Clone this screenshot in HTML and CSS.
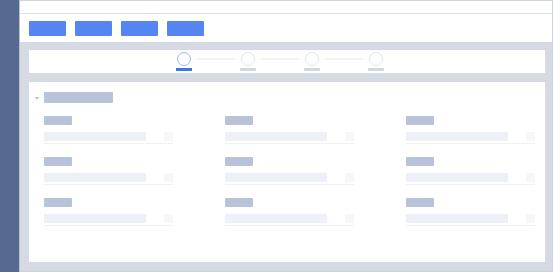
FILE: index.html
```html
<!DOCTYPE html>
<html lang="en">
<head>
    <meta charset="UTF-8">
    <title>Form wizard skeleton</title>
    <link rel="stylesheet" href="styles.css">
</head>
<body>
    <div class="frame">
        <aside class="sidebar"></aside>
        <div class="main">
            <div class="topbar"></div>
            <div class="toolbar">
                <span class="btn"></span>
                <span class="btn"></span>
                <span class="btn"></span>
                <span class="btn"></span>
            </div>
            <div class="content">
                <div class="card steps">
                    <div class="step active"><span class="dot"></span><span class="bar"></span></div>
                    <span class="link"></span>
                    <div class="step"><span class="dot"></span><span class="bar"></span></div>
                    <span class="link"></span>
                    <div class="step"><span class="dot"></span><span class="bar"></span></div>
                    <span class="link"></span>
                    <div class="step"><span class="dot"></span><span class="bar"></span></div>
                </div>
                <div class="card form">
                    <div class="section-head">
                        <span class="caret"></span>
                        <span class="title"></span>
                    </div>
                    <div class="fields">
                        <div class="field"><span class="label"></span><div class="input"><span class="value"></span><span class="icon"></span></div></div>
                        <div class="field"><span class="label"></span><div class="input"><span class="value"></span><span class="icon"></span></div></div>
                        <div class="field"><span class="label"></span><div class="input"><span class="value"></span><span class="icon"></span></div></div>
                        <div class="field"><span class="label"></span><div class="input"><span class="value"></span><span class="icon"></span></div></div>
                        <div class="field"><span class="label"></span><div class="input"><span class="value"></span><span class="icon"></span></div></div>
                        <div class="field"><span class="label"></span><div class="input"><span class="value"></span><span class="icon"></span></div></div>
                        <div class="field"><span class="label"></span><div class="input"><span class="value"></span><span class="icon"></span></div></div>
                        <div class="field"><span class="label"></span><div class="input"><span class="value"></span><span class="icon"></span></div></div>
                        <div class="field"><span class="label"></span><div class="input"><span class="value"></span><span class="icon"></span></div></div>
                    </div>
                </div>
            </div>
        </div>
    </div>
</body>
</html>
```

FILE: styles.css
```css
* { box-sizing: border-box; }
body { margin: 0; font-family: "Liberation Sans", Arial, sans-serif; background: #fff; }

.frame { display: flex; width: 553px; height: 272px; border: 1px solid #cdd3df; border-left: none; }
.sidebar { width: 20px; margin-top: -1px; margin-bottom: -1px; background: #566a8f; border-right: 1px solid #b9c2d5; }
.main { flex: 1; display: flex; flex-direction: column; }

.topbar { height: 13px; background: #fff; border-bottom: 1px solid #dfe2ea; }
.toolbar { height: 28px; display: flex; gap: 9px; padding: 7px 0 0 9px; background: #fff; }
.btn { width: 37px; height: 15px; background: #5585f1; border-radius: 1px; }

.content { flex: 1; display: flex; flex-direction: column; gap: 9px; padding: 8px 7px 0 9px; background: #d5dae4; }
.card { background: #fff; }

.steps { height: 23px; display: flex; align-items: flex-start; padding: 2px 0 0 147px; }
.step { width: 16px; display: flex; flex-direction: column; align-items: center; gap: 2px; }
.dot { width: 14px; height: 14px; border-radius: 50%; border: 1.5px solid #e2e5ed; }
.bar { width: 16px; height: 3px; background: #d3d7df; }
.step.active .dot { border-color: #9cb5f4; }
.step.active .bar { background: #3f76e8; }
.link { width: 38px; height: 2px; margin: 6px 5px 0; background: #f0f2f6; }

.form { height: 180px; padding: 10px 0 0 6px; }
.section-head { display: flex; align-items: center; gap: 5px; }
.caret { width: 0; height: 0; border-left: 2.5px solid transparent; border-right: 2.5px solid transparent; border-top: 3px solid #b8c2d8; margin-top: 1px; }
.title { width: 69px; height: 11px; background: #b8c2d8; border-radius: 1px; }

.fields { display: grid; grid-template-columns: repeat(3, 129px); column-gap: 52px; row-gap: 13px; padding: 13px 0 0 9px; }
.field { display: flex; flex-direction: column; }
.label { width: 28px; height: 9px; background: #b8c2d8; border-radius: 1px; margin-bottom: 7px; }
.input { display: flex; justify-content: space-between; height: 12px; border-bottom: 1px solid #eef0f5; }
.value { width: 102px; height: 9px; background: #edf0f7; border-radius: 1px; }
.icon { width: 9px; height: 9px; background: #f5f7fa; }
```
